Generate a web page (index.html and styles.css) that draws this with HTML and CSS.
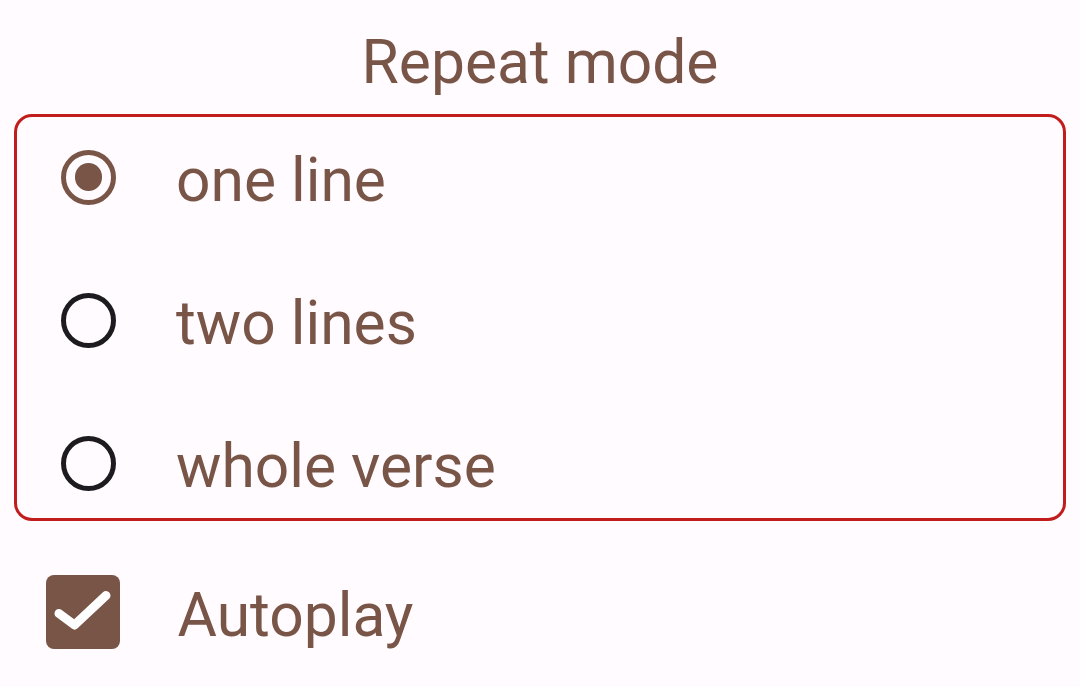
FILE: index.html
```html
<!DOCTYPE html>
<html lang="en">
<head>
<meta charset="utf-8">
<title>Repeat mode</title>
<link rel="stylesheet" href="styles.css">
</head>
<body>
<h1 class="title">Repeat mode</h1>
<div class="group">
  <div class="row">
    <span class="radio radio-on"><span class="dot"></span></span>
    <span class="label">one line</span>
  </div>
  <div class="row">
    <span class="radio"></span>
    <span class="label">two lines</span>
  </div>
  <div class="row">
    <span class="radio"></span>
    <span class="label">whole verse</span>
  </div>
</div>
<div class="check-row">
  <span class="checkbox">
    <svg width="74" height="74" viewBox="0 0 74 74"><path d="M13 38.5 L28.5 50 L60 20.5" fill="none" stroke="#fff" stroke-width="9" stroke-linecap="round" stroke-linejoin="round"/></svg>
  </span>
  <span class="label">Autoplay</span>
</div>
</body>
</html>
```

FILE: styles.css
```css
html, body {
  margin: 0;
  padding: 0;
  background: #fffbfe;
}
body {
  font-family: Roboto, "Noto Sans", sans-serif;
  color: #795548;
  height: 687px;
  overflow: hidden;
}
.title {
  margin: 0;
  padding-top: 26.5px;
  font-size: 60.5px;
  line-height: 72px;
  font-weight: 400;
  text-align: center;
}
.group {
  margin: 15.5px 14px 0 14px;
  height: 407px;
  box-sizing: border-box;
  border: 3.2px solid #c21d1d;
  border-radius: 18px;
  padding-top: 5px;
  display: flex;
  flex-direction: column;
  gap: 33px;
}
.row {
  height: 110px;
  display: flex;
  align-items: center;
  padding-left: 44px;
  gap: 60px;
}
.radio {
  width: 55px;
  height: 55px;
  box-sizing: border-box;
  border: 5.5px solid #1d1b20;
  border-radius: 50%;
  display: flex;
  align-items: center;
  justify-content: center;
  flex: none;
}
.radio-on {
  border-color: #795548;
}
.dot {
  width: 27.5px;
  height: 27.5px;
  border-radius: 50%;
  background: #795548;
}
.label {
  font-size: 60.5px;
  line-height: 72px;
  padding-top: 8px;
  white-space: nowrap;
}
.check-row {
  margin-top: 36px;
  height: 110px;
  display: flex;
  align-items: center;
  padding-left: 46px;
  gap: 57.5px;
}
.checkbox {
  width: 74px;
  height: 74px;
  border-radius: 8px;
  background: #795548;
  flex: none;
  display: block;
}
.checkbox svg {
  display: block;
}
```
